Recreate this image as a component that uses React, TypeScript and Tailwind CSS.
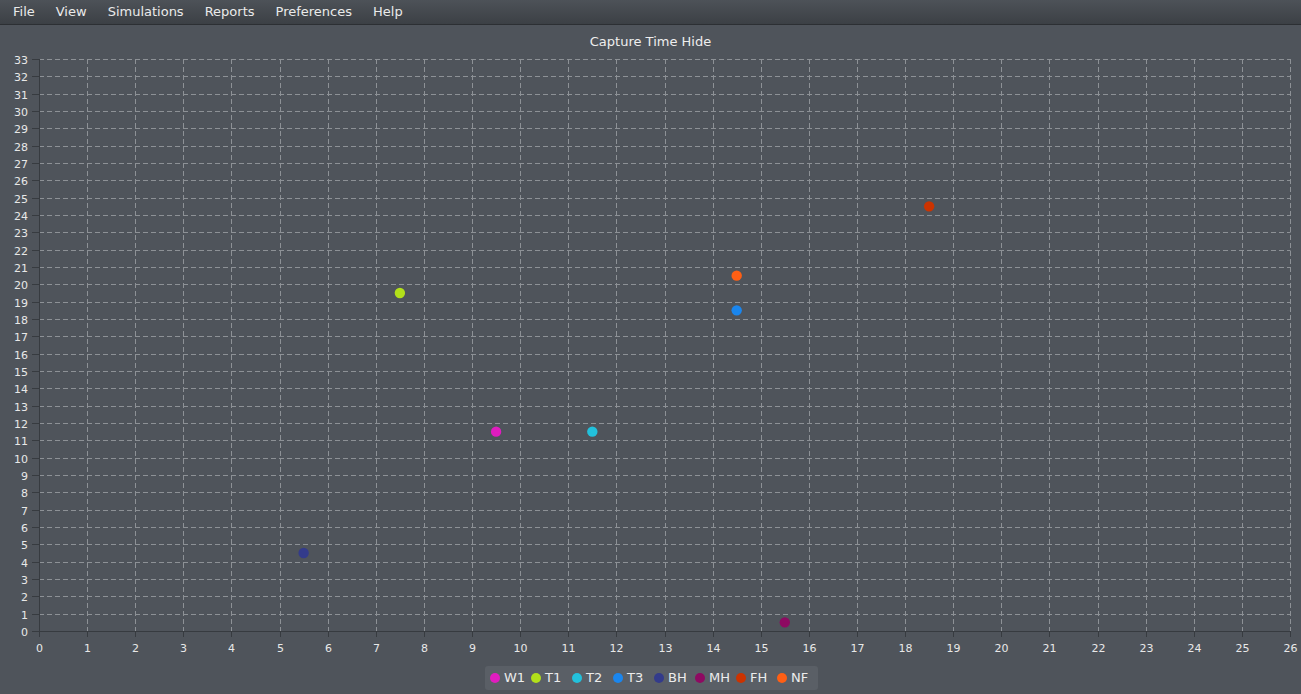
import React from "react";

const X0 = 39;
const X1 = 1290;
const Y0 = 631;
const Y1 = 59;
const XU = (X1 - X0) / 26;
const YU = (Y0 - Y1) / 33;

const px = (v: number) => X0 + v * XU;
const py = (v: number) => Y0 - v * YU;

const series = [
  { name: "W1", color: "#e01cbf", x: 9.5, y: 11.5 },
  { name: "T1", color: "#b2e01a", x: 7.5, y: 19.5 },
  { name: "T2", color: "#22c1dc", x: 11.5, y: 11.5 },
  { name: "T3", color: "#1a86ee", x: 14.5, y: 18.5 },
  { name: "BH", color: "#333b8b", x: 5.5, y: 4.5 },
  { name: "MH", color: "#8e0a62", x: 15.5, y: 0.5 },
  { name: "FH", color: "#cc3300", x: 18.5, y: 24.5 },
  { name: "NF", color: "#ff5f14", x: 14.5, y: 20.5 },
];

const menus = ["File", "View", "Simulations", "Reports", "Preferences", "Help"];

export default function App() {
  const xs = Array.from({ length: 27 }, (_, i) => i);
  const ys = Array.from({ length: 34 }, (_, i) => i);
  return (
    <div
      className="w-[1301px] h-[694px] bg-[#4f545b] flex flex-col overflow-hidden text-[#e6e6e6]"
      style={{ fontFamily: '"DejaVu Sans", Verdana, sans-serif' }}
    >
      <div className="h-[25px] shrink-0 flex items-center gap-[21px] pl-[13px] bg-gradient-to-b from-[#4d5258] to-[#3c4045] border-b border-[#2c2f33] text-[13px] leading-[16px] text-[#eaeaea]">
        {menus.map((m) => (
          <span key={m}>{m}</span>
        ))}
      </div>
      <div className="h-[25px] shrink-0 pt-[9px] text-center text-[13px] leading-[16px] text-[#eeeeee]">
        Capture Time Hide
      </div>
      <svg
        width={1301}
        height={607}
        viewBox="0 50 1301 607"
        className="shrink-0 block"
        style={{ fontFamily: '"DejaVu Sans", Verdana, sans-serif' }}
      >
        {ys.slice(1).map((k) => {
          const y = Math.round(py(k)) + 0.5;
          return (
            <line
              key={"h" + k}
              x1={X0}
              x2={X1 + 0.5}
              y1={y}
              y2={y}
              stroke="#8d9196"
              strokeWidth={1}
              strokeDasharray="5 3"
            />
          );
        })}
        {xs.slice(1).map((i) => {
          const x = Math.round(px(i)) + 0.5;
          return (
            <line
              key={"v" + i}
              x1={x}
              x2={x}
              y1={Y1}
              y2={Y0}
              stroke="#8d9196"
              strokeWidth={1}
              strokeDasharray="5 3"
            />
          );
        })}
        <line x1={X0 + 0.5} x2={X0 + 0.5} y1={Y1} y2={Y0 + 6} stroke="#373b40" strokeWidth={1} />
        <line x1={X0 - 7} x2={X1 + 1} y1={Y0 + 0.5} y2={Y0 + 0.5} stroke="#373b40" strokeWidth={1} />
        {ys.map((k) => {
          const y = Math.round(py(k)) + 0.5;
          return (
            <g key={"yt" + k}>
              <line x1={X0 - 7} x2={X0} y1={y} y2={y} stroke="#373b40" strokeWidth={1} />
              <text x={28} y={y + 4} textAnchor="end" fontSize={11} fill="#e8e8e8">
                {k}
              </text>
            </g>
          );
        })}
        {xs.map((i) => {
          const x = Math.round(px(i)) + 0.5;
          return (
            <g key={"xt" + i}>
              <line x1={x} x2={x} y1={Y0} y2={Y0 + 6} stroke="#373b40" strokeWidth={1} />
              <text x={x} y={652} textAnchor="middle" fontSize={11} fill="#e8e8e8">
                {i}
              </text>
            </g>
          );
        })}
        {series.map((s) => (
          <circle key={s.name} cx={px(s.x)} cy={py(s.y)} r={5.2} fill={s.color} />
        ))}
      </svg>
      <div className="flex justify-center mt-[9px] pl-[2px]">
        <div className="h-[24px] flex items-center pl-[5px] rounded-[3px] bg-[#5a5f66] text-[13px] leading-[16px] text-[#ececec]">
          {series.map((s) => (
            <div key={s.name} className="w-[41px] flex items-center gap-[4px]">
              <span className="w-[10px] h-[10px] rounded-full shrink-0" style={{ backgroundColor: s.color }} />
              <span>{s.name}</span>
            </div>
          ))}
        </div>
      </div>
    </div>
  );
}
